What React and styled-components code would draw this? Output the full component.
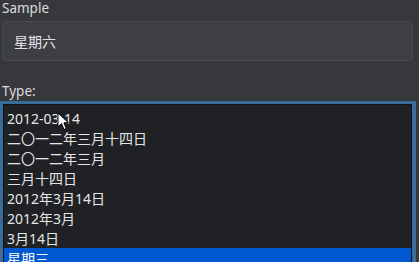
import styled, { createGlobalStyle } from "styled-components";

const GlobalStyle = createGlobalStyle`
  html, body {
    margin: 0;
    padding: 0;
    background: #37383c;
    overflow: hidden;
  }
  body {
    font-family: "Noto Sans", "Noto Sans CJK SC", sans-serif;
    -webkit-font-smoothing: antialiased;
  }
`;

const Panel = styled.div`
  position: relative;
  width: 419px;
  height: 262px;
  overflow: hidden;
  display: flex;
  flex-direction: column;
`;

const Label = styled.div`
  font-size: 13.5px;
  line-height: 16px;
  color: #dcdcdc;
  padding-left: 2px;
  margin-top: ${(p) => p.top || 0}px;
`;

const SampleBox = styled.div`
  margin: 5px 0 0 2px;
  width: 411px;
  height: 40px;
  flex-shrink: 0;
  box-sizing: border-box;
  border: 1px solid #4a4b50;
  border-radius: 4px;
  background: #3e3f44;
  display: flex;
  align-items: center;
  padding-left: 11px;
  font-family: "Noto Sans CJK SC", sans-serif;
  font-size: 14px;
  color: #e4e4e4;
`;

const Ring = styled.div`
  margin-top: 2px;
  width: 416px;
  box-sizing: border-box;
  border: 3px solid #3a6d9a;
  border-right-width: 4px;
  border-bottom: none;
  flex: 1;
  display: flex;
`;

const ListBox = styled.div`
  flex: 1;
  border: 1px solid #111215;
  border-bottom: none;
  background: #1f2125;
  padding-top: 3px;
  display: flex;
  flex-direction: column;
`;

const Row = styled.div`
  height: 20px;
  flex-shrink: 0;
  display: flex;
  align-items: center;
  padding-left: 3px;
  font-family: "Noto Sans", "Noto Sans CJK SC", sans-serif;
  font-size: 14px;
  color: ${(p) => (p.selected ? "#ffffff" : "#e6e6e6")};
  background: ${(p) => (p.selected ? "#0059d1" : "transparent")};
`;

const Cursor = styled.svg`
  position: absolute;
  left: 57px;
  top: 112px;
  width: 13px;
  height: 20px;
`;

const items = [
  "2012-03-14",
  "二〇一二年三月十四日",
  "二〇一二年三月",
  "三月十四日",
  "2012年3月14日",
  "2012年3月",
  "3月14日",
  "星期三",
];

export default function App() {
  return (
    <Panel>
      <GlobalStyle />
      <Label>Sample</Label>
      <SampleBox>星期六</SampleBox>
      <Label top={22}>Type:</Label>
      <Ring>
        <ListBox>
          {items.map((t, i) => (
            <Row key={t} selected={i === items.length - 1}>
              {t}
            </Row>
          ))}
        </ListBox>
      </Ring>
      <Cursor viewBox="0 0 13 20">
        <path
          d="M1 1 L1 15 L4.5 11.5 L7 17.5 L9.3 16.5 L6.9 10.8 L11.5 10.8 Z"
          fill="#fff"
          stroke="#000"
          strokeWidth="1"
          strokeLinejoin="round"
        />
      </Cursor>
    </Panel>
  );
}
